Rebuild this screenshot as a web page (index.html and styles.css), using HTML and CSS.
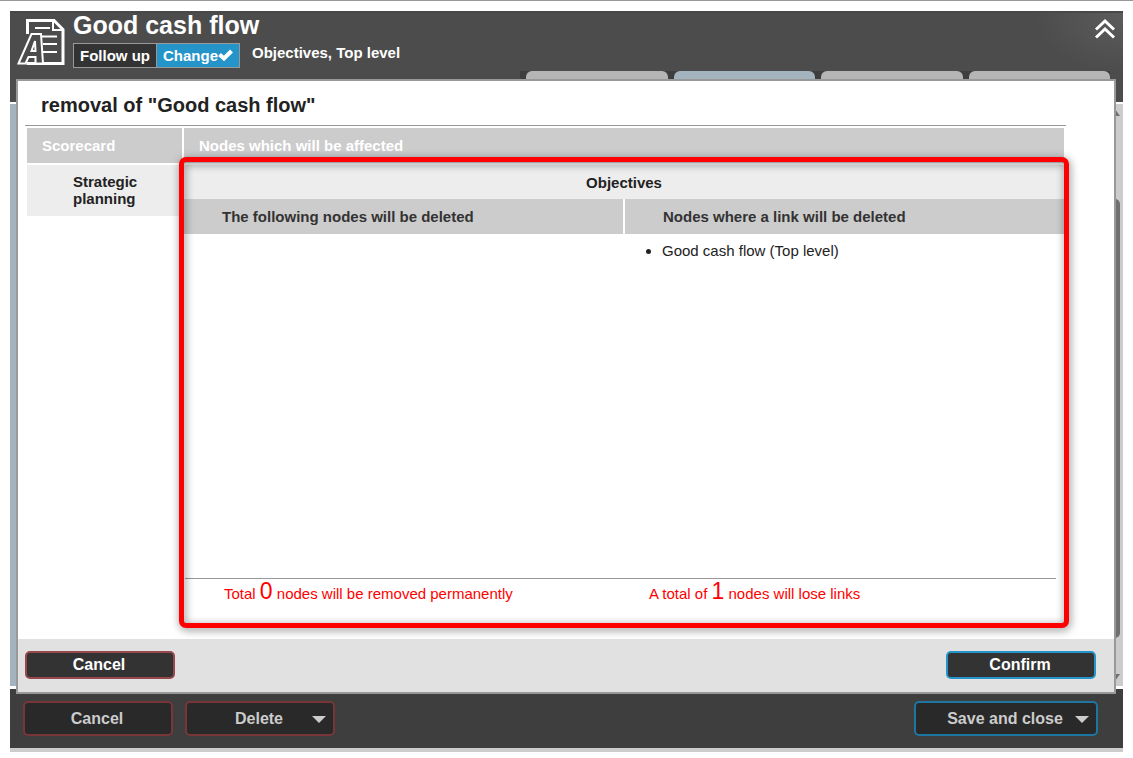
FILE: index.html
```html
<!DOCTYPE html>
<html lang="en">
<head>
  <meta charset="UTF-8">
  <meta name="viewport" content="width=device-width, initial-scale=1.0">
  <title>Good cash flow</title>
  <link rel="stylesheet" href="styles.css">
</head>
<body>
  <div class="app">
    <header class="app-header">
      <svg class="node-icon" viewBox="0 0 48 48" aria-hidden="true">
        <path d="M10.500 16V2.500H37L46 11.500V45.500H9.500" />
        <path class="thin" d="M36 2.500V12h10M18 10h15M24 18.500h16M26 26h14M26 34h14" />
        <path class="letter" d="M1.500 45.500 14.500 16H24l2 29.500h-7.500V39h-7l-3 6.500zM14.500 33h4l-.5-10z" />
      </svg>
      <div class="heading">
        <h1>Good cash flow</h1>
        <div class="sub-heading">
          <div class="mode-switch">
            <button type="button">Follow up</button>
            <button type="button" class="active">Change<svg class="check" viewBox="0 0 15 12" aria-hidden="true"><path d="M1.500 5.500 6 9.500 13.500 2" /></svg></button>
          </div>
          <span class="location">Objectives, Top level</span>
        </div>
      </div>
      <button type="button" class="collapse" aria-label="Collapse">
        <svg viewBox="0 0 22 22" aria-hidden="true"><path d="M2 11.500 11 3l9 8.500M2 19.500 11 11l9 8.500" /></svg>
      </button>
      <div class="tabs">
        <span class="tab"></span>
        <span class="tab selected"></span>
        <span class="tab"></span>
        <span class="tab"></span>
      </div>
    </header>

    <main class="workspace">
      <div class="scrollbar">
        <span class="arrow up"></span>
        <span class="thumb"></span>
        <span class="arrow down"></span>
      </div>
    </main>

    <footer class="app-footer">
      <button type="button" class="btn btn-danger">Cancel</button>
      <button type="button" class="btn btn-danger has-menu">Delete</button>
      <button type="button" class="btn btn-primary has-menu save">Save and close</button>
    </footer>

    <section class="dialog" role="dialog" aria-labelledby="dialogTitle">
      <h2 id="dialogTitle">removal of "Good cash flow"</h2>
      <div class="dialog-body">
        <table class="affected">
          <thead>
            <tr>
              <th class="col-scorecard">Scorecard</th>
              <th>Nodes which will be affected</th>
            </tr>
          </thead>
          <tbody>
            <tr>
              <td><div class="scorecard">Strategic planning</div></td>
              <td>
                <table class="nodes">
                  <thead>
                    <tr><th colspan="2" class="group">Objectives</th></tr>
                    <tr>
                      <th>The following nodes will be deleted</th>
                      <th>Nodes where a link will be deleted</th>
                    </tr>
                  </thead>
                  <tbody>
                    <tr>
                      <td></td>
                      <td><ul><li>Good cash flow (Top level)</li></ul></td>
                    </tr>
                  </tbody>
                </table>
              </td>
            </tr>
          </tbody>
        </table>
        <div class="totals">
          <span>Total <b>0</b> nodes will be removed permanently</span>
          <span>A total of <b>1</b> nodes will lose links</span>
        </div>
        <div class="highlight"></div>
      </div>
      <div class="dialog-footer">
        <button type="button" class="btn btn-danger">Cancel</button>
        <button type="button" class="btn btn-primary">Confirm</button>
      </div>
    </section>
  </div>
</body>
</html>
```

FILE: styles.css
```css
* {
  box-sizing: border-box;
}
body {
  margin: 0;
  padding: 10px 10px 6px;
  border-top: 1px solid #999;
  background: #fff;
  color: #222;
  font-family: 'Liberation Sans', Arial, sans-serif;
  font-size: 15px;
  line-height: 17px;
}
h1, h2, ul {
  margin: 0;
  padding: 0;
}
button {
  font-family: inherit;
  font-weight: bold;
  cursor: pointer;
}
.app {
  position: relative;
  display: flex;
  flex-direction: column;
  min-height: calc(100vh - 17px);
  border-bottom: 4px solid #ccc;
}

/* header */
.app-header {
  position: relative;
  display: flex;
  align-items: flex-start;
  height: 91px;
  padding: 0 7px;
  background: radial-gradient(ellipse 90px 60px at 100% 0, #5c5c5c, #4c4c4c);
  border-top: 2px solid #484848;
  color: #fff;
}
.node-icon {
  width: 48px;
  height: 48px;
  margin-top: 5px;
  fill: none;
  stroke: #fff;
  stroke-width: 3;
}
.node-icon .thin {
  stroke-width: 2;
}
.node-icon .letter {
  fill: #4c4c4c;
  stroke-width: 2;
}
.heading {
  flex: 1;
  padding-left: 8px;
}
.heading h1 {
  font-size: 25px;
  line-height: 24px;
}
.sub-heading {
  display: flex;
  gap: 12px;
  margin-top: 6px;
}
.mode-switch {
  display: flex;
  border: 1px solid #999;
}
.mode-switch button {
  display: flex;
  align-items: center;
  height: 23px;
  padding: 0 6px 1px;
  border: none;
  background: #333;
  color: #fff;
  font-size: 15px;
}
.mode-switch .active {
  border-left: 1px solid #999;
  background: #2595c9;
}
.check {
  width: 15px;
  height: 12px;
  fill: none;
  stroke: #fff;
  stroke-width: 4;
}
.location {
  padding-top: 1px;
  font-weight: bold;
}
.collapse {
  width: 22px;
  height: 22px;
  margin-top: 5px;
  padding: 0;
  border: none;
  background: none;
}
.collapse svg {
  display: block;
  fill: none;
  stroke: #fff;
  stroke-width: 3;
}
.tabs {
  position: absolute;
  right: 13px;
  bottom: 0;
  display: flex;
  gap: 6px;
  width: 590px;
  height: 31px;
  padding-left: 6px;
  background: #3e3e3e;
}
.tab {
  flex: 1;
  border-radius: 6px 6px 0 0;
  background: #b5b5b5;
}
.tab.selected {
  background: #a3b4be;
}

/* workspace behind the dialog */
.workspace {
  display: flex;
  flex: 1;
  justify-content: flex-end;
  margin: 2px 0 3px;
  background: #a3b4be;
}
.scrollbar {
  display: flex;
  flex-direction: column;
  width: 17px;
  padding: 5px 3px;
  background: #ccc;
}
.scrollbar .thumb {
  flex: 1;
  margin: 83px 0 36px;
  border-radius: 5px;
  background: #707070;
}
.arrow {
  border: 5px solid transparent;
}
.arrow.up {
  border-top: none;
  border-bottom: 7px solid #707070;
}
.arrow.down {
  border-bottom: none;
  border-top: 7px solid #707070;
}

/* buttons */
.btn {
  position: relative;
  width: 150px;
  height: 28px;
  padding: 0 2px 0 0;
  border: 2px solid;
  border-radius: 5px;
  background: #333;
  color: #fff;
  font-size: 16px;
}
.btn-danger {
  border-color: #98474b;
}
.btn-primary {
  border-color: #2595c9;
}
.app-footer {
  display: flex;
  gap: 12px;
  padding: 12px 25px 12px 13px;
  background: #3e3e3e;
}
.app-footer .btn {
  height: 35px;
  background: #292929;
  color: #ccc;
}
.app-footer .btn-danger {
  border-color: #793639;
}
.app-footer .btn-primary {
  border-color: #1d76a0;
}
.app-footer .save {
  width: 184px;
  margin-left: auto;
}
.has-menu::after {
  content: '';
  position: absolute;
  top: 13px;
  right: 7px;
  border: 7px solid transparent;
  border-top-color: #ccc;
  border-bottom: none;
}

/* dialog */
.dialog {
  position: absolute;
  top: 68px;
  right: 7px;
  bottom: 54px;
  left: 6px;
  display: flex;
  flex-direction: column;
  border: 2px solid #999;
  background: #fff;
}
.dialog h2 {
  margin: 0 48px 0 7px;
  padding: 12px 16px 8px;
  border-bottom: 1px solid #999;
  font-size: 20px;
  line-height: 24px;
}
.dialog-body {
  position: relative;
  display: flex;
  flex: 1;
  flex-direction: column;
  margin: 0 48px 0 7px;
}
.affected {
  width: 100%;
  border-spacing: 2px;
  table-layout: fixed;
}
.affected td {
  padding: 0;
  vertical-align: top;
}
.affected th {
  height: 35px;
  padding: 0 15px;
  background: #ccc;
  color: #fff;
  text-align: left;
}
.affected .col-scorecard {
  width: 155px;
}
.scorecard {
  padding: 8px 30px 9px 46px;
  background: #ededed;
  font-weight: bold;
}
.nodes {
  width: 100%;
  border-collapse: collapse;
  table-layout: fixed;
}
.nodes th {
  padding: 0 38px;
  color: #333;
}
.nodes th + th {
  border-left: 2px solid #fff;
}
.nodes .group {
  height: 34px;
  background: #ededed;
  color: #222;
  text-align: center;
}
.nodes ul {
  padding: 8px 0 8px 38px;
}
.totals {
  display: grid;
  grid-template-columns: 1fr 1fr;
  gap: 18px;
  height: 61px;
  margin: auto 10px 0 160px;
  padding-left: 39px;
  border-top: 1px solid #999;
  color: #f00;
  line-height: 24px;
}
.totals b {
  font-size: 23px;
  font-weight: normal;
}
.highlight {
  position: absolute;
  top: 31px;
  right: -3px;
  bottom: 11px;
  left: 154px;
  border: 5px solid #f00;
  border-radius: 7px;
  filter: drop-shadow(1px 2px 4px rgba(0, 0, 0, 0.5));
  pointer-events: none;
}
.dialog-footer {
  display: flex;
  justify-content: space-between;
  padding: 12px 18px 13px 7px;
  background: #e1e1e1;
}
```
